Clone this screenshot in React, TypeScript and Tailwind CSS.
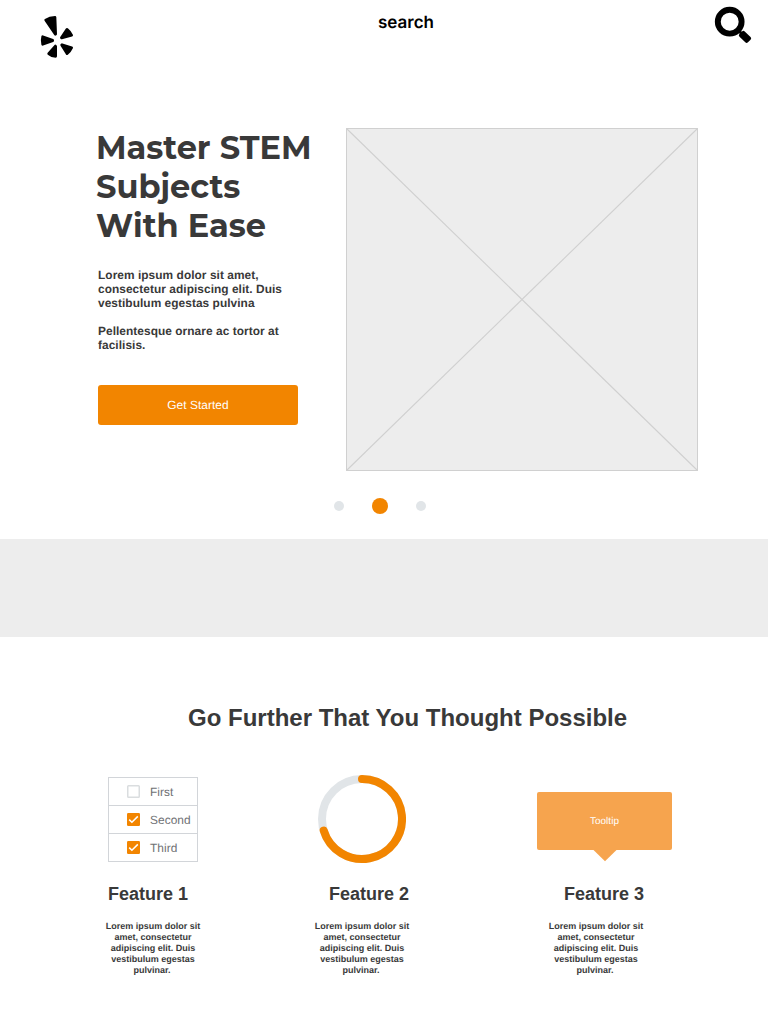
import React from "react";

const rows = [
  { label: "First", checked: false },
  { label: "Second", checked: true },
  { label: "Third", checked: true },
];

function Logo() {
  return (
    <svg className="h-[44px] w-[34px]" viewBox="30 30 102 132" fill="#000" stroke="#000" strokeWidth="8" strokeLinejoin="round">
      <path d="M47 45Q59 37 75 37L77 87L76 88Z" />
      <path d="M111 73Q121 81 125 91L95 99L94 98Z" />
      <path d="M96 119L125 128Q120 139 111 146L95 120Z" />
      <path d="M77 124V154Q65 154 56 146L76 123Z" />
      <path d="M38 95L68 106V107L38 118Q35 106 38 95Z" />
    </svg>
  );
}

function SearchIcon() {
  return (
    <svg className="h-[38px] w-[38px]" viewBox="0 0 38 38" fill="none" stroke="#000">
      <circle cx="15.7" cy="15.7" r="11.9" strokeWidth="5.9" />
      <path d="M23.5 23.5L28 28" strokeWidth="3" />
      <path d="M26.8 29.4L29.4 26.8L35.2 32.4L32.6 35Z" fill="#000" strokeWidth="3.8" strokeLinejoin="round" />
    </svg>
  );
}

function CheckBox({ checked }: { checked: boolean }) {
  return (
    <svg className="h-[13px] w-[13px]" viewBox="0 0 13 13" fill="none">
      {checked ? (
        <>
          <rect width="13" height="13" rx="1.2" fill="#f28500" />
          <path d="M2.2 6.6L4.9 9.3L10.8 3.4" stroke="#fff" strokeWidth="1.5" />
        </>
      ) : (
        <rect x="0.75" y="0.75" width="11.5" height="11.5" rx="0.8" stroke="#dadddf" strokeWidth="1.5" />
      )}
    </svg>
  );
}

function Blurb({ className }: { className: string }) {
  return (
    <p className={"w-[110px] text-center text-[9px] leading-[11px] font-bold whitespace-nowrap [text-rendering:geometricPrecision] " + className}>
      Lorem ipsum dolor sit<br />amet, consectetur<br />adipiscing elit. Duis<br />vestibulum egestas<br /><span className="pr-[2px]">pulvinar.</span>
    </p>
  );
}

export default function App() {
  return (
    <div className="h-[1024px] w-[768px] overflow-hidden bg-white font-['Liberation_Sans',sans-serif] text-[#393939]">
      <header className="flex h-[128px] items-start justify-between pr-[16px] pl-[40px]">
        <div className="w-[320px] pt-[15px]"><Logo /></div>
        <div className="w-[92px] pt-[11px] text-center font-['Inter',sans-serif] text-[17px] leading-[24px] font-semibold text-black [text-rendering:geometricPrecision]">search</div>
        <div className="flex w-[300px] justify-end pt-[6px]"><SearchIcon /></div>
      </header>

      <section className="flex h-[343px]">
        <div className="w-[346px] pl-[98px]">
          <h1 className="-ml-[2px] font-['Montserrat',sans-serif] text-[32px] leading-[39px] font-bold whitespace-nowrap">
            <span className="block">Master STEM</span>
            <span className="block">Subjects</span>
            <span className="block">With Ease</span>
          </h1>
          <p className="mt-[23px] text-[11.9px] leading-[14px] font-bold tracking-[0.05px] whitespace-nowrap [text-rendering:geometricPrecision]">
            Lorem ipsum dolor sit amet,<br />consectetur adipiscing elit. Duis<br />vestibulum egestas pulvina<br /><br />Pellentesque ornare ac tortor at<br />facilisis.
          </p>
          <button className="mt-[33px] h-[40px] w-[200px] rounded-[3px] bg-[#f28500] pt-[2px] text-[11.9px] tracking-[0.05px] text-white [text-rendering:geometricPrecision]">Get Started</button>
        </div>
        <svg className="h-[343px] w-[352px]" viewBox="0 0 352 343" fill="none" stroke="#d0d0d0">
          <rect x="0.5" y="0.5" width="351" height="342" fill="#ededed" />
          <path d="M0.5 0.5L351.5 342.5M351.5 0.5L0.5 342.5" strokeWidth="1.1" />
        </svg>
      </section>

      <div className="flex h-[68px] items-center pt-[2px] pl-[334px]">
        <span className="h-[10px] w-[10px] rounded-full bg-[#e1e5e8]" />
        <span className="ml-[28px] h-[16px] w-[16px] rounded-full bg-[#f28500]" />
        <span className="ml-[28px] h-[10px] w-[10px] rounded-full bg-[#e1e5e8]" />
      </div>
      <div className="h-[98px] bg-[#ededed]" />

      <h2 className="pt-[67px] pl-[188px] text-[24px] leading-[28px] font-bold whitespace-nowrap">Go Further That You Thought Possible</h2>

      <section className="flex pt-[42px]">
        <article className="w-[300px]">
          <div className="flex h-[107px] items-start pt-[3px] pl-[108px]">
            <div className="w-[90px] border border-b-0 border-[#d2d5d9]">
              {rows.map((row) => (
                <div key={row.label} className="flex h-[28px] items-center gap-[10px] border-b border-[#d2d5d9] pl-[18px] text-[11.9px] tracking-[0.05px] text-[#6f7174] [text-rendering:geometricPrecision]">
                  <CheckBox checked={row.checked} />
                  <span className="pt-[2px]">{row.label}</span>
                </div>
              ))}
            </div>
          </div>
          <h3 className="pl-[108px] text-[18px] leading-[26px] font-bold">Feature 1</h3>
          <Blurb className="mt-[14px] ml-[98px]" />
        </article>
        <article className="w-[220px]">
          <div className="h-[107px] pl-[18px]">
            <svg className="h-[90px] w-[88px]" viewBox="0 0 88 90" fill="none" strokeWidth="8">
              <circle cx="44" cy="45" r="40" stroke="#e1e5e8" />
              <path d="M44 5A40 40 0 1 1 5.7 56.5" stroke="#f28500" strokeLinecap="round" />
            </svg>
          </div>
          <h3 className="pl-[29px] text-[18px] leading-[26px] font-bold">Feature 2</h3>
          <Blurb className="mt-[14px] ml-[7px]" />
        </article>
        <article className="w-[248px]">
          <div className="h-[107px] pt-[18px] pl-[17px]">
            <div className="flex h-[58px] w-[135px] items-center justify-center rounded-[2px] bg-[#f6a44e] pt-[3px] text-[9.9px] tracking-[0.05px] text-white [text-rendering:geometricPrecision]">Tooltip</div>
            <svg className="ml-[56px] h-[12px] w-[24px]" viewBox="0 0 24 12"><path d="M0.5 0H23.5L12 11.3Z" fill="#f6a44e" /></svg>
          </div>
          <h3 className="pl-[44px] text-[18px] leading-[26px] font-bold">Feature 3</h3>
          <Blurb className="mt-[14px] ml-[21px]" />
        </article>
      </section>
    </div>
  );
}
